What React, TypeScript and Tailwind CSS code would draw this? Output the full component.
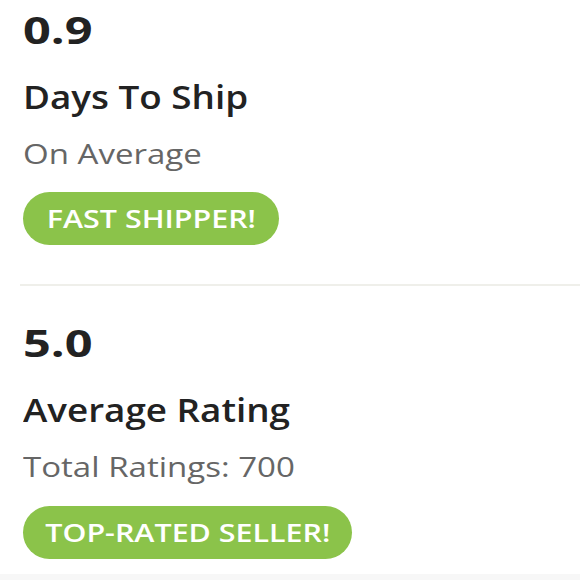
const font = { fontFamily: '"Open Sans", Inter, sans-serif' }

function Stat({ value, title, sub, badge, badgeW, badgeMt }: { value: string; title: string; sub: string; badge: string; badgeW: string; badgeMt: string }) {
  return (
    <div className="flex flex-col items-start">
      <div className="text-[38px] leading-[44px] font-bold text-[#222] origin-left scale-x-[1.28]">{value}</div>
      <div className="mt-[28px] text-[32px] leading-[36px] font-semibold text-[#222] origin-left scale-x-[1.15] whitespace-nowrap">{title}</div>
      <div className="mt-[21px] text-[28px] leading-[34px] text-[#666] origin-left scale-x-[1.18] whitespace-nowrap">{sub}</div>
      <div className={`h-[53px] rounded-full bg-[#8bc34a] text-white flex items-center justify-center ${badgeW} ${badgeMt}`}>
        <span className="text-[26px] font-semibold scale-x-[1.17] whitespace-nowrap">{badge}</span>
      </div>
    </div>
  )
}

export default function App() {
  return (
    <div className="w-[580px] h-[580px] bg-white overflow-hidden flex flex-col" style={font}>
      <div className="pl-[23px] pt-[7px] pb-[39px]">
        <Stat value="0.9" title="Days To Ship" sub="On Average" badge="FAST SHIPPER!" badgeW="w-[256px]" badgeMt="mt-[22px]" />
      </div>
      <div className="ml-[20px] h-[2px] bg-[#efefea]" />
      <div className="pl-[23px] pt-[34px] flex-1">
        <Stat value="5.0" title="Average Rating" sub="Total Ratings: 700" badge="TOP-RATED SELLER!" badgeW="w-[329px]" badgeMt="mt-[23px]" />
      </div>
      <div className="h-[6px] bg-[#f7f7f7]" />
    </div>
  )
}
